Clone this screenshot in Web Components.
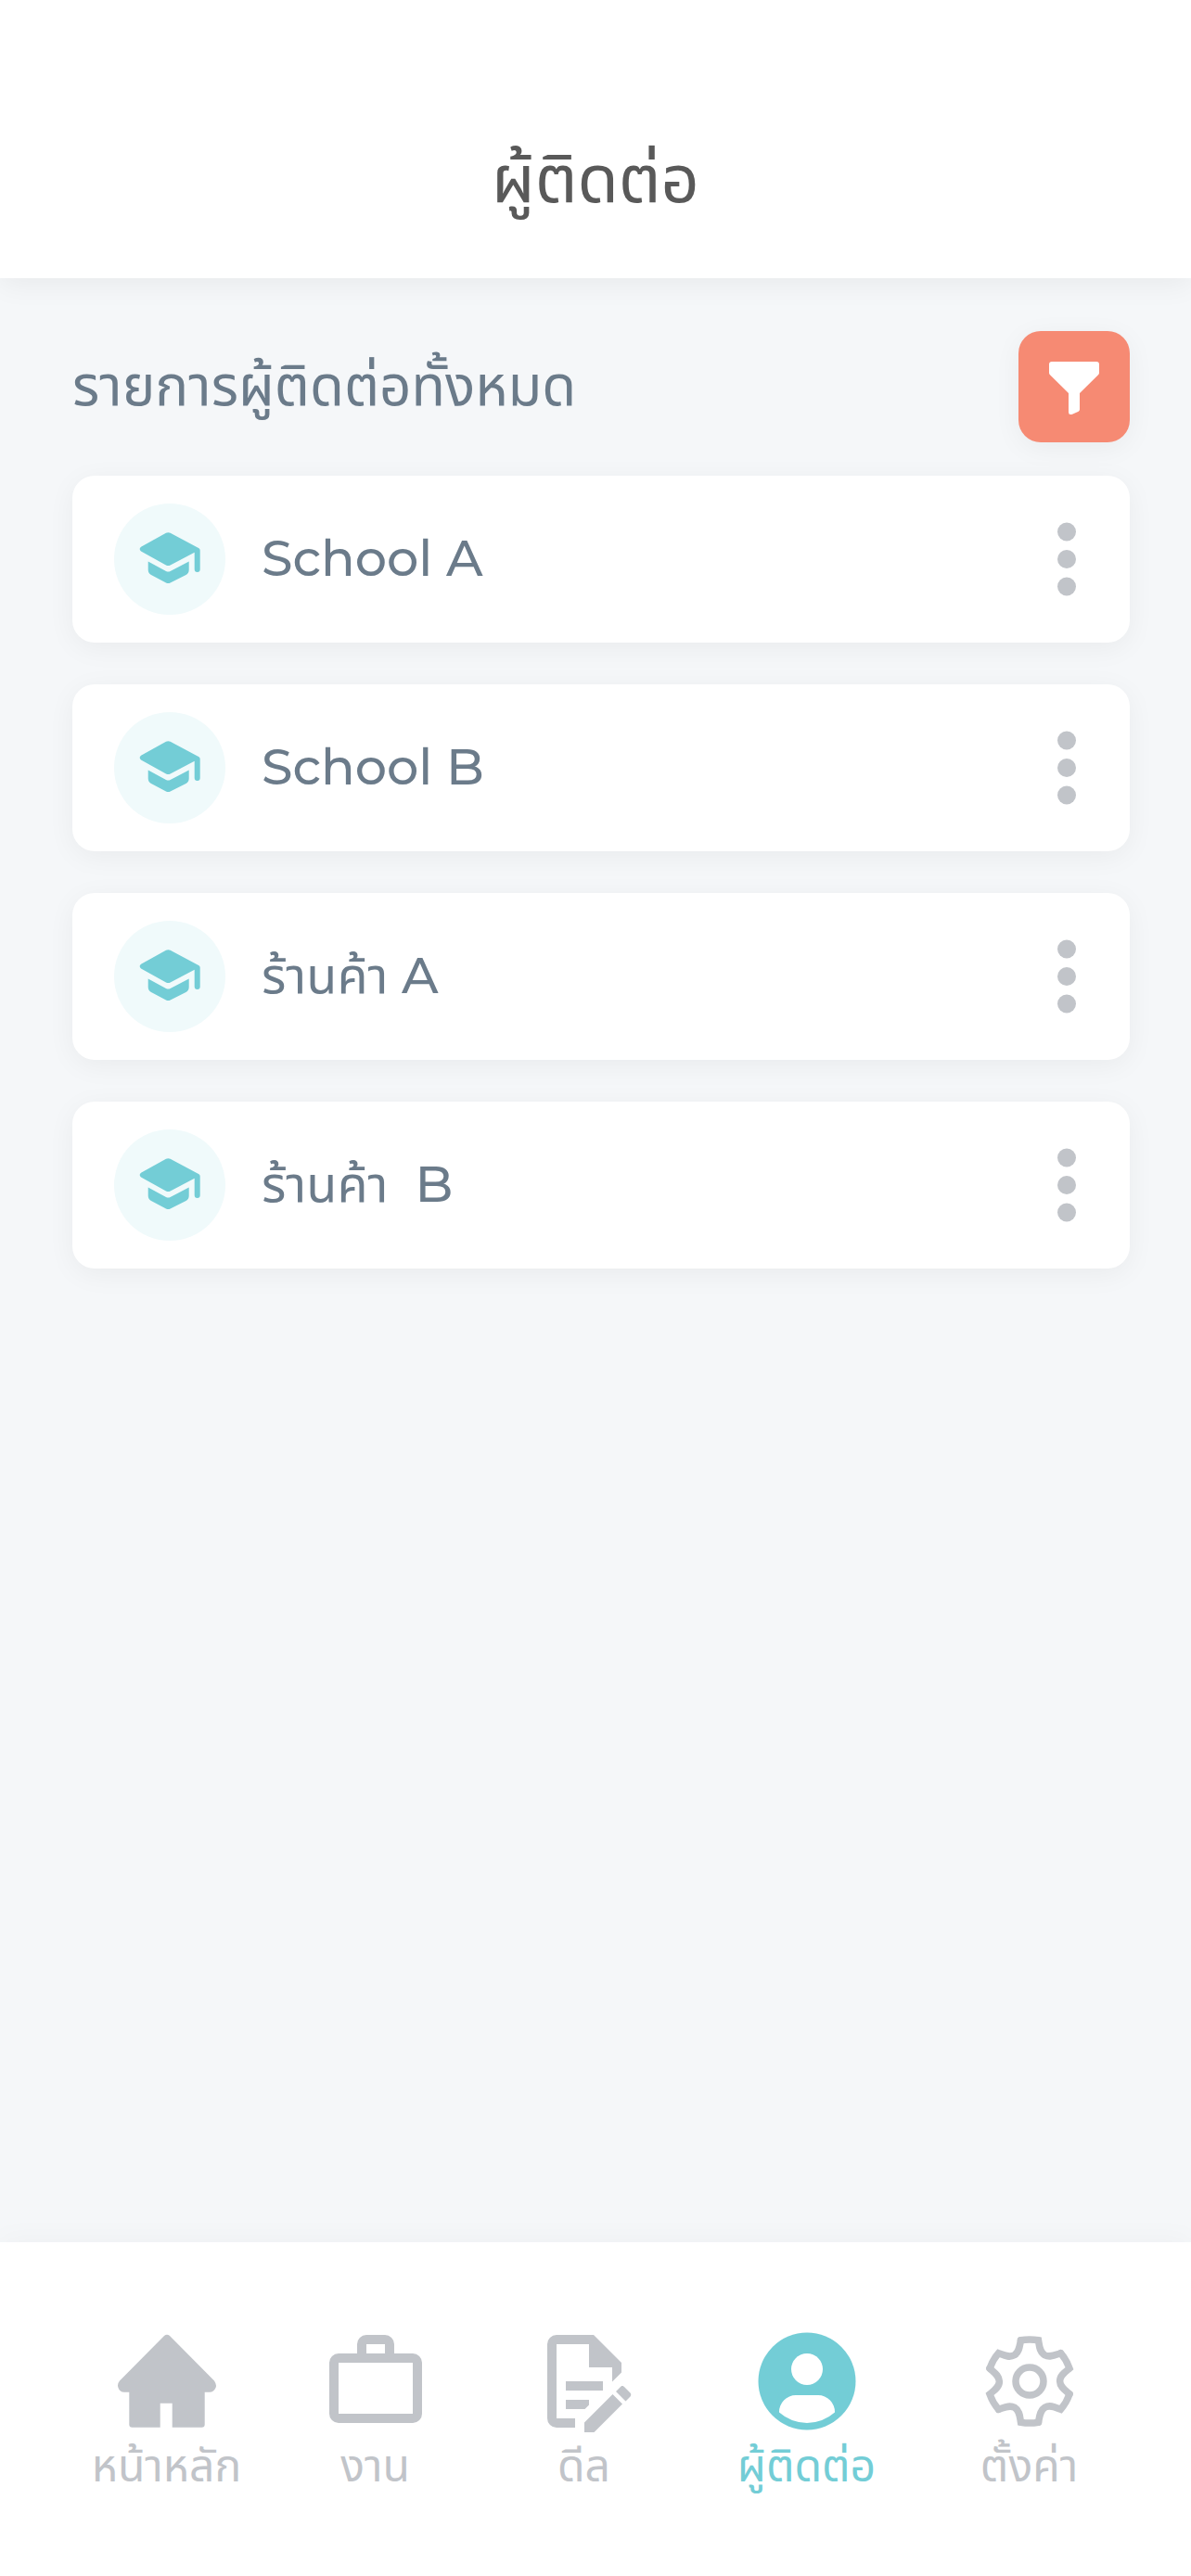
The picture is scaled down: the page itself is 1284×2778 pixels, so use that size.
<!DOCTYPE html>
<html lang="th">
<head>
<meta charset="utf-8">
<meta name="viewport" content="width=device-width, initial-scale=1">
<title>ผู้ติดต่อ</title>
<style>
  body { margin: 0; background: #f5f7f9; font-family: Montserrat, Inter, "Noto Sans Thai", "Noto Sans", sans-serif; }
</style>
</head>
<body>
<contacts-app></contacts-app>

<script>
const gearTooth = [0, 60, 120, 180, 240, 300].map(a =>
  `<path transform="rotate(${a} 60 60) translate(60 60)" d="M-9.5 -44.2Q0 -46 9.5 -44.2C10.5 -38 10.700 -31.600 16.200 -28.300C21.700 -25.300 27.300 -28.300 33.500 -30.300"/>`).join('');

const icons = {
  home: '<path fill="currentColor" d="M57 11Q60 8.500 63 11L111 59.500Q114 64 112.500 67Q110.500 71.700 106 71.700H100.700V106.500Q100.700 109.700 97.500 109.700H65.700V83.700H52.700V109.700H22.500Q19.300 109.700 19.300 106.500V71.700H14Q9 71.700 7.500 67Q6 63 9 59.500Z"/>',
  work: '<path fill="currentColor" fill-rule="evenodd" d="M50 10H70A10 10 0 0 1 80 20V30H100A10 10 0 0 1 110 40V95A10 10 0 0 1 100 105H20A10 10 0 0 1 10 95V40A10 10 0 0 1 20 30H40V20A10 10 0 0 1 50 10ZM50 20V30H70V20ZM20 40V95H100V40Z"/>',
  deal: '<path transform="scale(5)" fill="currentColor" d="M8,12H16V14H8V12M10,20H6V4H13V9H18V12.1L20,10.1V8L14,2H6A2,2 0 0,0 4,4V20A2,2 0 0,0 6,22H10V20M8,18H12.1L13,17.1V16H8V18M20.2,13C20.3,13 20.5,13.1 20.6,13.2L21.9,14.5C22.1,14.7 22.1,15.1 21.9,15.3L20.9,16.3L18.8,14.2L19.8,13.2C19.9,13.1 20,13 20.2,13M20.2,16.9L14.1,23H12V20.9L18.1,14.8L20.2,16.9Z"/>',
  contact: '<circle cx="60" cy="60" r="52.5" fill="currentColor"/><circle cx="60" cy="47" r="17" fill="#fff"/><path fill="#fff" d="M30 93.500A18 18 0 0 1 48 75H72A18 18 0 0 1 90 93.500A45 45 0 0 1 30 93.500Z"/>',
  settings: `<g fill="none" stroke="currentColor" stroke-width="7.5" stroke-linecap="round">${gearTooth}<circle cx="60" cy="60" r="15"/></g>`,
  school: '<path fill="currentColor" d="M56 31.800Q58.300 30.500 60.600 31.800L91.500 48.300Q92.700 49 92.700 50.500V71A3 3 0 0 1 86.700 71V52.800L60.600 66.500Q58.300 67.500 56 66.500L29 51.500Q26.300 49 29 46.700Z"/><path fill="currentColor" d="M36.700 62.500L56 73Q58.300 74 60.600 73L80.700 62.500V71.500Q80.700 75 77.500 77L60.600 85.500Q58.300 86.700 56 85.500L40 77Q36.700 75 36.700 71.500Z"/>',
  filter: '<path fill="currentColor" d="M36 33H84Q87 33 87 36V45Q87 46.300 86 47.300L66 67V84.500Q66 86 64.700 86.700L58 89.700Q54 91 54 87.500V67L34 47.300Q33 46.300 33 45V36Q33 33 36 33Z"/>',
  more: '<g fill="currentColor"><circle cx="60" cy="30.500" r="10"/><circle cx="60" cy="60" r="10"/><circle cx="60" cy="89.500" r="10"/></g>'
};

function define(name, render) {
  customElements.define(name, class extends HTMLElement {
    connectedCallback() {
      if (!this.shadowRoot) this.attachShadow({ mode: 'open' }).innerHTML = render(this);
    }
  });
}

define('app-icon', el => `
  <style>:host{display:block;width:120px;height:120px} svg{display:block;width:100%;height:100%}</style>
  <svg viewBox="0 0 120 120" aria-hidden="true">${icons[el.getAttribute('name')]}</svg>`);

define('app-header', () => `
  <style>
    :host{display:block;background:#fff;box-shadow:0 6px 30px rgba(0,0,0,.06)}
    h1{margin:0;padding:142px 48px 58px;text-align:center;font-size:72px;line-height:100px;font-weight:400;color:#595959}
  </style>
  <header><h1><slot></slot></h1></header>`);

define('filter-button', () => `
  <style>
    :host{display:block}
    button{display:block;border:0;padding:0;border-radius:24px;background:#f68a73;color:#fff;box-shadow:0 6px 30px rgba(0,0,0,.05)}
  </style>
  <button type="button" aria-label="ตัวกรอง"><app-icon name="filter"></app-icon></button>`);

define('contact-card', () => `
  <style>
    :host{display:flex;align-items:center;gap:39px;padding:30px 8px 30px 45px;background:#fff;border-radius:24px;box-shadow:0 6px 30px rgba(0,0,0,.05);color:#6b7b8a}
    .avatar{flex:none;border-radius:50%;background:#f0fafb;color:#73cdd6}
    .name{flex:1;padding-bottom:2px;font-size:54px;line-height:72px;font-weight:500;white-space:pre}
    ::slotted(span){font-weight:400}
    button{border:0;padding:0;background:none;color:#c1c4c9}
  </style>
  <app-icon class="avatar" name="school"></app-icon>
  <span class="name"><slot></slot></span>
  <button type="button" aria-label="เพิ่มเติม"><app-icon name="more"></app-icon></button>`);

define('nav-item', el => `
  <style>
    :host{display:block;color:#c1c4c9}
    :host([active]){color:#73cdd6}
    a{display:flex;flex-direction:column;align-items:center;color:inherit;text-decoration:none;font-size:48px;line-height:62px;white-space:nowrap}
  </style>
  <a href="#${el.getAttribute('icon')}"><app-icon name="${el.getAttribute('icon')}"></app-icon><slot></slot></a>`);

define('bottom-nav', () => `
  <style>
    :host{display:block;background:#fff;box-shadow:0 -3px 30px rgba(0,0,0,.03)}
    nav{display:grid;grid-template-columns:15fr 15fr 15fr 17fr 15fr;padding:90px 62px 88px 67px}
  </style>
  <nav><slot></slot></nav>`);

define('contacts-app', () => `
  <style>
    :host{display:flex;flex-direction:column;min-height:100vh}
    main{flex:1;padding:57px 66px 57px 78px}
    .bar{display:flex;align-items:center;justify-content:space-between;margin-bottom:36px}
    h2{margin:0;padding-bottom:2px;font-size:60px;line-height:80px;font-weight:400;color:#6b7b8a}
    .list{display:flex;flex-direction:column;gap:45px}
  </style>
  <app-header>ผู้ติดต่อ</app-header>
  <main>
    <div class="bar"><h2>รายการผู้ติดต่อทั้งหมด</h2><filter-button></filter-button></div>
    <div class="list">
      <contact-card>School A</contact-card>
      <contact-card>School B</contact-card>
      <contact-card><span>ร้านค้า</span> A</contact-card>
      <contact-card><span>ร้านค้า</span>  B</contact-card>
    </div>
  </main>
  <bottom-nav>
    <nav-item icon="home">หน้าหลัก</nav-item>
    <nav-item icon="work">งาน</nav-item>
    <nav-item icon="deal">ดีล</nav-item>
    <nav-item icon="contact" active>ผู้ติดต่อ</nav-item>
    <nav-item icon="settings">ตั้งค่า</nav-item>
  </bottom-nav>`);
</script>
</body>
</html>
